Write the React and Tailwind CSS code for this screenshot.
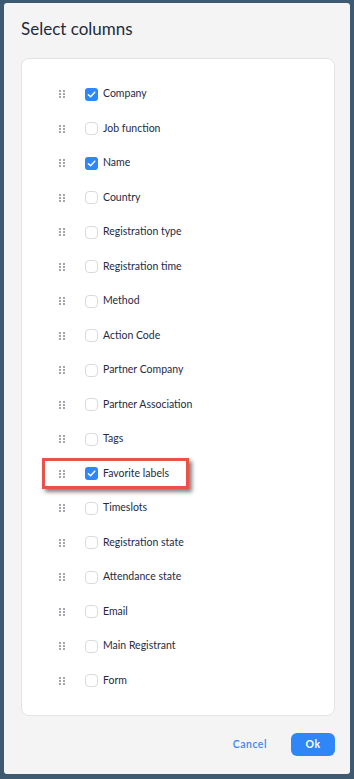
const columns = [
  { label: 'Company', checked: true },
  { label: 'Job function' },
  { label: 'Name', checked: true },
  { label: 'Country' },
  { label: 'Registration type' },
  { label: 'Registration time' },
  { label: 'Method' },
  { label: 'Action Code' },
  { label: 'Partner Company' },
  { label: 'Partner Association' },
  { label: 'Tags' },
  { label: 'Favorite labels', checked: true, highlight: true },
  { label: 'Timeslots' },
  { label: 'Registration state' },
  { label: 'Attendance state' },
  { label: 'Email' },
  { label: 'Main Registrant' },
  { label: 'Form' },
];

const DragHandle = () => (
  <svg width="6" height="8" viewBox="0 0 6 8" className="shrink-0">
    {[0, 3, 6].map((y) =>
      [0, 4].map((x) => <rect key={`${x}-${y}`} x={x} y={y} width="2" height="2" fill="#a3a7ad" />)
    )}
  </svg>
);

const Checkbox = ({ checked }) =>
  checked ? (
    <span className="w-[13px] h-[13px] rounded-[3px] bg-[#2f86f6] flex items-center justify-center shrink-0">
      <svg width="9" height="9" viewBox="0 0 10 10" fill="none">
        <path d="M1.5 5.2 4 7.6 8.6 2.4" stroke="white" strokeWidth="1.6" strokeLinecap="round" strokeLinejoin="round" />
      </svg>
    </span>
  ) : (
    <span className="w-[13px] h-[13px] rounded-[4px] border border-[#d9dbde] bg-white shrink-0" />
  );

const Item = ({ col }) => (
  <>
    <DragHandle />
    <div className="flex items-center ml-[20px]">
      <Checkbox checked={col.checked} />
      <span className="ml-[5px] text-[10.5px] text-[#1f2a44]">{col.label}</span>
    </div>
  </>
);

export default function App() {
  return (
    <div
      className="h-[779px] bg-[#3d5a72] pt-[3px] pb-[5px] pl-[4px] pr-[4px] overflow-hidden"
      style={{ fontFamily: 'Lato, "Noto Sans", sans-serif' }}
    >
      <div className="h-full bg-[#f4f4f4] rounded-[3px] flex flex-col pl-[17px] pr-[15px]">
        <h1 className="text-[17px] text-[#1e2b3c] pt-[15px] leading-[22px]">Select columns</h1>
        <div className="mt-[18px] bg-white border border-[#e3e4e6] rounded-[8px] pt-[18px] pb-[17px]">
          {columns.map((col) =>
            col.highlight ? (
              <div key={col.label} className="h-[34.5px] flex items-center pl-[20px]">
                <div className="flex items-center h-[31px] w-[147px] border-[3px] border-[#e8524a] shadow-[3px_3px_4px_rgba(0,0,0,0.5)] pl-[14px]">
                  <Item col={col} />
                </div>
              </div>
            ) : (
              <div key={col.label} className="h-[34.5px] flex items-center pl-[37px]">
                <Item col={col} />
              </div>
            )
          )}
        </div>
        <div className="flex items-center justify-end mt-[17px]">
          <button className="text-[10.5px] font-semibold text-[#3b86f0] tracking-[0.5px] mr-[24px]">Cancel</button>
          <button className="w-[44px] h-[23px] rounded-[6px] bg-[#2f86f6] text-white text-[10.5px] font-bold tracking-[0.5px]">
            Ok
          </button>
        </div>
      </div>
    </div>
  );
}
